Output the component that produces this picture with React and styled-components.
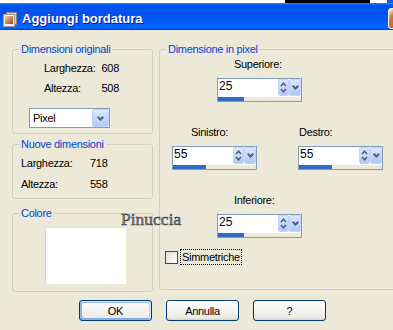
import styled, { createGlobalStyle } from "styled-components";

const GlobalStyle = createGlobalStyle`
  html, body {
    margin: 0;
    padding: 0;
    width: 393px;
    height: 330px;
    overflow: hidden;
    background: #fff;
  }
  body {
    font-family: "Liberation Sans", Arial, sans-serif;
    font-size: 11px;
  }
`;

const FACE = "#ECE9D8";

// the dialog is wider than the shot, so the window clips what lies past the right edge
const Window = styled.div`
  position: relative;
  width: 393px;
  height: 330px;
  overflow: hidden;
  display: flex;
  flex-direction: column;
  background: ${FACE};
  color: #000;
  font-family: "Liberation Sans", Arial, sans-serif;
  font-size: 11px;
  letter-spacing: -0.3px;
`;

const BackdropStrip = styled.div`
  flex: none;
  height: 3px;
  background: linear-gradient(to right, #fff 0 285px, #000 285px 370px, #fff 370px 387px, #0a5cea 387px);
`;

const TitleBar = styled.div`
  flex: none;
  height: 27px;
  display: flex;
  align-items: flex-start;
  padding-left: 2px;
  background: linear-gradient(180deg, #0997ff, #0053ee 8%, #0050ee 40%, #06f 88%, #06f 93%, #005bff 95%, #003dd7 96%, #003dd7);
`;

const TitleIcon = styled.svg`
  flex: none;
  margin-top: 9px;
`;

const Title = styled.div`
  margin: 8px 0 0 4px;
  line-height: 15px;
  font-size: 13px;
  font-weight: bold;
  letter-spacing: 0;
  color: #fff;
  text-shadow: 1px 1px #0f1089;
`;

const CloseButton = styled.div`
  flex: none;
  width: 21px;
  height: 21px;
  box-sizing: border-box;
  margin: 5px -16px 0 auto;
  border: 1px solid #fff;
  border-radius: 3px;
  background: radial-gradient(circle at 90% 90%, #cc4600 0%, #dc6527 55%, #cd7546 70%, #ffccb2 90%, #fff 100%);
`;

const Body = styled.div`
  display: flex;
  flex-direction: column;
  padding: 19px 0 0 12px;
`;

const Panels = styled.div`
  display: flex;
  align-items: flex-start;
  gap: 6px;
`;

const LeftColumn = styled.div`
  flex: none;
  width: 141px;
  display: flex;
  flex-direction: column;
`;

const GroupBox = styled.div`
  flex: none;
  box-sizing: border-box;
  width: ${({ $width }) => $width}px;
  height: ${({ $height }) => $height}px;
  margin-top: ${({ $top }) => $top || 0}px;
  border: 1px solid #d0d0bf;
  border-radius: 3px;
  display: flex;
  flex-direction: column;
  align-items: flex-start;
`;

const GroupTitle = styled.div`
  margin: -7px 0 0 6px;
  padding: 0 2px;
  line-height: 13px;
  color: #0046d5;
  background: ${FACE};
`;

const InfoGrid = styled.div`
  display: grid;
  grid-template-columns: ${({ $labelWidth }) => $labelWidth}px ${({ $valueWidth }) => $valueWidth}px;
  row-gap: ${({ $rowGap }) => $rowGap}px;
  margin: ${({ $top }) => $top}px 0 0 ${({ $indent }) => $indent}px;
  line-height: 13px;
`;

const InfoValue = styled.div`
  text-align: ${({ $right }) => ($right ? "right" : "left")};
  white-space: nowrap;
`;

const Select = styled.div`
  box-sizing: border-box;
  width: 81px;
  height: 20px;
  margin: 13px 0 0 16px;
  padding-left: 3px;
  display: flex;
  align-items: center;
  border: 1px solid #7f9db9;
  background: #fff;
  line-height: 13px;
`;

const ComboButton = styled.div`
  box-sizing: border-box;
  width: ${({ $width }) => $width}px;
  height: ${({ $height }) => $height}px;
  margin-left: ${({ $push }) => ($push ? "auto" : "0")};
  display: flex;
  align-items: center;
  justify-content: center;
  border: 1px solid #c3d3fd;
  border-radius: 2px;
  background: linear-gradient(180deg, #dde7fe 0%, #c7d7fb 50%, #b4c8f6 100%);
`;

const Swatch = styled.div`
  width: 81px;
  height: 57px;
  margin: 7px 0 0 32px;
  box-sizing: border-box;
  border-left: 1px solid #d8d6cc;
  border-top: 1px solid #e4e2d8;
  background: #fff;
`;

const FieldRow = styled.div`
  display: flex;
  margin: ${({ $top }) => $top}px 0 0 ${({ $indent }) => $indent}px;
`;

const Field = styled.div`
  display: flex;
  flex-direction: column;
  align-items: flex-start;
  margin-left: ${({ $gap }) => $gap || 0}px;
`;

const FieldLabel = styled.div`
  margin: 0 0 7px ${({ $offset }) => $offset}px;
  line-height: 13px;
`;

const Spin = styled.div`
  box-sizing: border-box;
  width: 85px;
  height: 24px;
  display: flex;
  flex-direction: column;
  border: 1px solid #7f9db9;
  background: #fff;
`;

const SpinTop = styled.div`
  height: 18px;
  display: flex;
  align-items: flex-start;
`;

const SpinValue = styled.div`
  flex: 1;
  padding-left: 1px;
  font-size: 12px;
  line-height: 15px;
  letter-spacing: 0;
`;

const SpinTrack = styled.div`
  height: 4px;
  background: #ece9d8;
`;

const SpinFill = styled.div`
  height: 100%;
  background: #316ac5;
`;

const CheckRow = styled.div`
  display: flex;
  align-items: center;
  margin: 11px 0 0 5px;
`;

const CheckBox = styled.div`
  box-sizing: border-box;
  width: 13px;
  height: 13px;
  border: 1px solid #1c5180;
  background: linear-gradient(135deg, #dcdcd7, #fff);
`;

const CheckLabel = styled.div`
  margin-left: 2px;
  padding: 0 1px;
  line-height: 14px;
  border: 1px dotted #000;
`;

const ButtonRow = styled.div`
  display: flex;
  gap: 14px;
  margin: 8px 0 0 67px;
`;

const Button = styled.div`
  box-sizing: border-box;
  width: 73px;
  height: 21px;
  display: flex;
  align-items: center;
  justify-content: center;
  border: 1px solid #003c74;
  border-radius: 3px;
  background: linear-gradient(180deg, #fff, #ecebe6 86%, #d6d0c5);
  box-shadow: ${({ $default }) =>
    $default
      ? "inset -1px 1px #cee7ff, inset 1px 2px #98b8ea, inset -2px 2px #bcd4f6, inset 1px -1px #89ade4, inset 2px -2px #89ade4"
      : "none"};
`;

const Watermark = styled.div`
  position: absolute;
  left: 121px;
  top: 210px;
  font-family: "Liberation Serif", "Times New Roman", serif;
  font-size: 17.5px;
  line-height: 18px;
  letter-spacing: 0;
  color: #8a8a8a;
  -webkit-text-stroke: 0.5px #2a2a2a;
  text-shadow: 1px 1px 0 rgba(255, 255, 255, 0.7);
  pointer-events: none;
`;

const Chevron = ({ up, width = 7, stroke = 2 }) => (
  <svg width={width} height="5" viewBox="0 0 7 5">
    <path
      d={up ? "M0.8 4.2 L3.5 1.3 L6.2 4.2" : "M0.8 0.8 L3.5 3.7 L6.2 0.8"}
      fill="none"
      stroke="#4d6185"
      strokeWidth={stroke}
    />
  </svg>
);

const UpDownButton = () => (
  <ComboButton $width={11} $height={17} $push>
    <svg width="7" height="13" viewBox="0 0 7 13">
      <path d="M1 5 L3.5 2.3 L6 5" fill="none" stroke="#4d6185" strokeWidth="1.6" />
      <path d="M1 8 L3.5 10.7 L6 8" fill="none" stroke="#4d6185" strokeWidth="1.6" />
    </svg>
  </ComboButton>
);

const sides = {
  top: { label: "Superiore:", value: 25 },
  left: { label: "Sinistro:", value: 55 },
  right: { label: "Destro:", value: 55 },
  bottom: { label: "Inferiore:", value: 25 },
};

const barWidth = (value) => Math.round(20 + value * 0.23);

const SpinField = ({ side, labelOffset, gap }) => {
  const { label, value } = sides[side];
  return (
    <Field $gap={gap}>
      <FieldLabel $offset={labelOffset}>{label}</FieldLabel>
      <Spin>
        <SpinTop>
          <SpinValue>{value}</SpinValue>
          <UpDownButton />
          <ComboButton $width={12} $height={17}>
            <Chevron />
          </ComboButton>
        </SpinTop>
        <SpinTrack>
          <SpinFill style={{ width: barWidth(value) }} />
        </SpinTrack>
      </Spin>
    </Field>
  );
};

const AppIcon = () => (
  <TitleIcon width="16" height="16" viewBox="0 0 16 16">
    <defs>
      <linearGradient id="pic" x1="0" y1="0" x2="1" y2="1">
        <stop offset="0" stopColor="#f2c9a6" />
        <stop offset="0.5" stopColor="#d9875a" />
        <stop offset="1" stopColor="#8c4a2c" />
      </linearGradient>
    </defs>
    <rect x="4.5" y="0.5" width="10" height="12" fill="#d4d4d4" stroke="#8a8a8a" />
    <rect x="1.5" y="2.5" width="11" height="12" fill="#f6f6f6" stroke="#9a9a9a" />
    <rect x="3" y="4" width="8" height="8" fill="url(#pic)" />
  </TitleIcon>
);

export default function App() {
  return (
    <>
      <GlobalStyle />
      <Window>
        <BackdropStrip />
        <TitleBar>
          <AppIcon />
          <Title>Aggiungi bordatura</Title>
          <CloseButton />
        </TitleBar>
        <Body>
          <Panels>
            <LeftColumn>
              <GroupBox $width={141} $height={85}>
                <GroupTitle>Dimensioni originali</GroupTitle>
                <InfoGrid $labelWidth={57} $valueWidth={18} $rowGap={7} $top={6} $indent={31}>
                  <div>Larghezza:</div>
                  <InfoValue $right>608</InfoValue>
                  <div>Altezza:</div>
                  <InfoValue $right>508</InfoValue>
                </InfoGrid>
                <Select>
                  Pixel
                  <ComboButton $width={17} $height={18} $push>
                    <Chevron />
                  </ComboButton>
                </Select>
              </GroupBox>
              <GroupBox $width={141} $height={55} $top={10}>
                <GroupTitle>Nuove dimensioni</GroupTitle>
                <InfoGrid $labelWidth={69} $valueWidth={30} $rowGap={8} $top={6} $indent={8}>
                  <div>Larghezza:</div>
                  <InfoValue>718</InfoValue>
                  <div>Altezza:</div>
                  <InfoValue>558</InfoValue>
                </InfoGrid>
              </GroupBox>
              <GroupBox $width={141} $height={79} $top={14}>
                <GroupTitle>Colore</GroupTitle>
                <Swatch />
              </GroupBox>
            </LeftColumn>
            <GroupBox $width={249} $height={241}>
              <GroupTitle>Dimensione in pixel</GroupTitle>
              <FieldRow $top={2} $indent={57}>
                <SpinField side="top" labelOffset={17} />
              </FieldRow>
              <FieldRow $top={24} $indent={12}>
                <SpinField side="left" labelOffset={19} />
                <SpinField side="right" labelOffset={1} gap={41} />
              </FieldRow>
              <FieldRow $top={24} $indent={57}>
                <SpinField side="bottom" labelOffset={17} />
              </FieldRow>
              <CheckRow>
                <CheckBox />
                <CheckLabel>Simmetriche</CheckLabel>
              </CheckRow>
            </GroupBox>
          </Panels>
          <ButtonRow>
            <Button $default>OK</Button>
            <Button>Annulla</Button>
            <Button>?</Button>
          </ButtonRow>
        </Body>
        <Watermark>Pinuccia</Watermark>
      </Window>
    </>
  );
}
